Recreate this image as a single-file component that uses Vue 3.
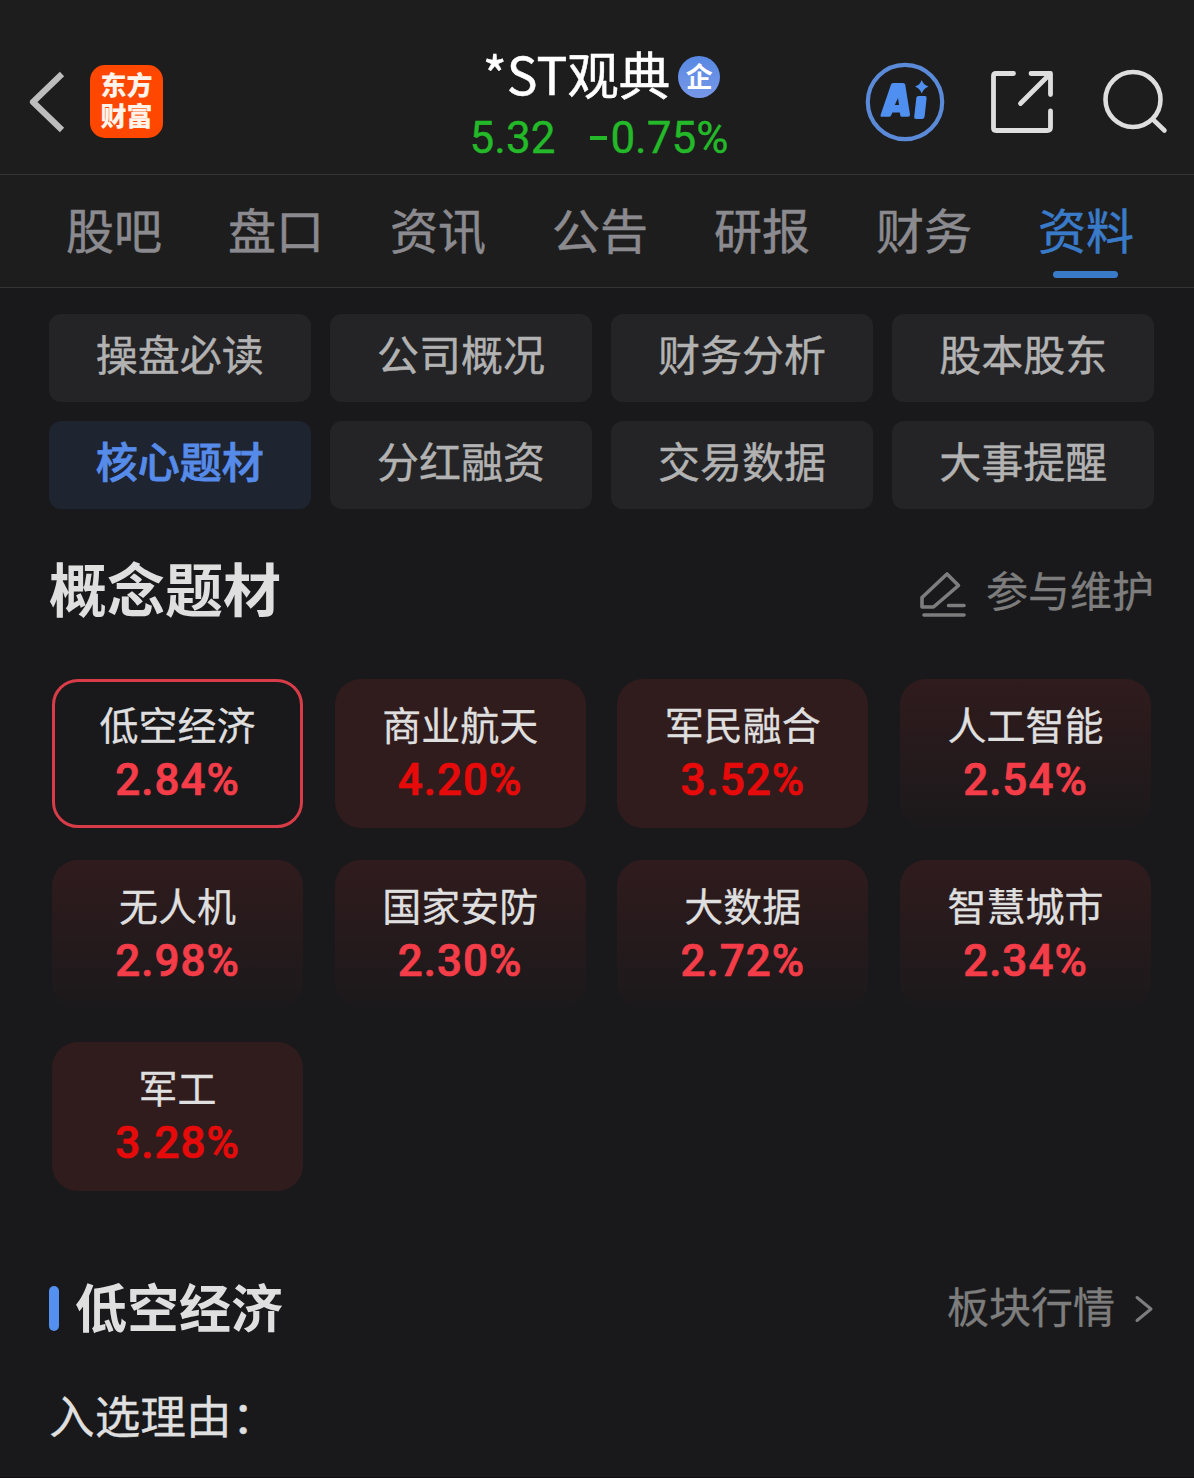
<script setup>
const tabs = ['股吧', '盘口', '资讯', '公告', '研报', '财务', '资料']
const activeTab = '资料'

const sections = [
  '操盘必读', '公司概况', '财务分析', '股本股东',
  '核心题材', '分红融资', '交易数据', '大事提醒',
]
const activeSection = '核心题材'

const concepts = [
  { name: '低空经济', change: '2.84%', tone: 'selected' },
  { name: '商业航天', change: '4.20%', tone: 'strong' },
  { name: '军民融合', change: '3.52%', tone: 'strong' },
  { name: '人工智能', change: '2.54%', tone: 'mild' },
  { name: '无人机', change: '2.98%', tone: 'mild' },
  { name: '国家安防', change: '2.30%', tone: 'mild' },
  { name: '大数据', change: '2.72%', tone: 'mild' },
  { name: '智慧城市', change: '2.34%', tone: 'mild' },
  { name: '军工', change: '3.28%', tone: 'strong' },
]
</script>

<template>
  <div class="page">
    <header class="header">
      <div class="side left">
        <svg class="back" width="36" height="62" viewBox="0 0 36 62" fill="none" stroke="#bdbdbd" stroke-width="6.2" stroke-linejoin="round">
          <path d="M33 3 L4 31 L33 59" />
        </svg>
        <div class="logo"><span>东方</span><span>财富</span></div>
      </div>
      <div class="stock">
        <div class="name-row">
          <span class="name">*ST观典</span>
          <span class="badge">企</span>
        </div>
        <div class="quote"><span>5.32</span><span class="delta"><i class="minus"></i>0.75%</span></div>
      </div>
      <div class="side right">
        <svg width="80" height="80" viewBox="0 0 80 80">
          <circle cx="40" cy="40" r="37.2" fill="none" stroke="#5a8ad8" stroke-width="4.200" />
          <path fill="#4f8ff0" fill-rule="evenodd" d="M28 21 H38 Q39.800 21 40.200 22.500 L45 52.500 Q45 54.800 43 54.800 H37 Q35.500 54.800 35.300 53.500 L34.800 50.500 H27.500 L26 53.500 Q25.500 54.800 24 54.800 H17 Q14.800 54.800 15.800 52.200 L26 22.500 Q26.500 21 28 21 Z M33 36 L29.800 43 H34 Z" />
          <path fill="#4f8ff0" d="M53.500 34 H60 Q61.800 34 61.600 36 L59.600 54.500 Q59.300 57 57 57 H51 Q49 57 49.200 55 L51.300 36 Q51.500 34 53.500 34 Z M56.700 18 Q58.500 23 63.500 24.500 Q58.500 26.500 56.700 31.500 Q55 26.500 50 24.500 Q55 23 56.700 18 Z" />
        </svg>
        <svg class="share" width="64" height="64" viewBox="0 0 64 64" fill="none" stroke="#dedede" stroke-width="4.800" stroke-linecap="round" stroke-linejoin="round">
          <path d="M23.500 3.500 H6 Q3.500 3.500 3.500 6 V58 Q3.500 60.500 6 60.500 H57 Q60.500 60.500 60.500 57.500 V41" />
          <path d="M41 3.500 H60.500 V24.500 M59 5 L30.500 33.500" />
        </svg>
        <svg class="search" width="66" height="66" viewBox="0 0 66 66" fill="none" stroke="#dedede" stroke-width="4.600" stroke-linecap="round">
          <circle cx="31" cy="30.500" r="27.500" />
          <path d="M51 50.500 L62.500 61.500" />
        </svg>
      </div>
    </header>

    <nav class="tabs">
      <a v-for="tab in tabs" :key="tab" class="tab" :class="{ active: tab === activeTab }">{{ tab }}</a>
    </nav>

    <main class="content">
      <div class="sections">
        <button v-for="item in sections" :key="item" class="section" :class="{ active: item === activeSection }">{{ item }}</button>
      </div>

      <div class="heading">
        <h1>概念题材</h1>
        <a class="maintain">
          <svg width="48" height="48" viewBox="0 0 48 48" fill="none" stroke="#7d7d7d" stroke-width="3.600" stroke-linecap="round" stroke-linejoin="round">
            <path d="M28 4 L39.500 15.500 L14.500 37 H3 V27.500 Z" />
            <path d="M29.500 35.500 H45 M5 45 H45" />
          </svg>
          <span>参与维护</span>
        </a>
      </div>

      <div class="concepts">
        <div v-for="c in concepts" :key="c.name" class="card" :class="c.tone">
          <span class="card-name">{{ c.name }}</span>
          <span class="card-change">{{ c.change }}</span>
        </div>
      </div>

      <div class="subheading">
        <i class="bar"></i>
        <h2>低空经济</h2>
        <a class="market">
          <span>板块行情</span>
          <svg width="20" height="28" viewBox="0 0 20 28" fill="none" stroke="#7d7d7d" stroke-width="3" stroke-linecap="round" stroke-linejoin="round">
            <path d="M3 2.500 L17 14 L3 25.500" />
          </svg>
        </a>
      </div>
      <p class="reason">入选理由：</p>
    </main>
  </div>
</template>

<style>
body {
  margin: 0;
  background: #19191b;
}
</style>

<style scoped>
.page {
  width: 1194px;
  height: 1478px;
  overflow: hidden;
  box-sizing: border-box;
  border-bottom: 1px solid #110f12;
  background: #19191b;
  font-family: "Noto Sans CJK SC", sans-serif;
  color: #dfdfdf;
}

.header {
  display: grid;
  grid-template-columns: 400px 1fr 400px;
  height: 175px;
  box-sizing: border-box;
  background: #1d1d1d;
  border-bottom: 1px solid #343434;
}

.side {
  display: flex;
  align-items: flex-start;
}

.back {
  margin: 71px 0 0 29px;
}

.logo {
  display: flex;
  flex-direction: column;
  align-items: center;
  width: 73px;
  height: 73px;
  margin: 65px 0 0 25px;
  padding-top: 3px;
  box-sizing: border-box;
  border-radius: 15px;
  background: #ff4700;
  color: #fff4ec;
  font-size: 26px;
  font-weight: 900;
  line-height: 31px;
}

.stock {
  display: flex;
  flex-direction: column;
  align-items: center;
}

.name-row {
  display: flex;
  align-items: center;
  gap: 8px;
  height: 60px;
  margin-top: 43px;
  padding-left: 9px;
}

.name {
  color: #fff;
  font-size: 51.500px;
  line-height: 60px;
  -webkit-text-stroke: 0.500px currentColor;
}

.badge {
  display: flex;
  align-items: center;
  justify-content: center;
  width: 42px;
  height: 42px;
  margin-top: 8px;
  border-radius: 50%;
  background: linear-gradient(#5788e3, #7898e7);
  color: #fff;
  font-size: 27px;
  font-weight: 700;
  line-height: 36px;
  padding-bottom: 3px;
  box-sizing: border-box;
}

.quote {
  display: flex;
  gap: 35px;
  margin-top: 10px;
  padding-left: 4px;
  color: #23b929;
  font-family: Roboto, sans-serif;
  font-size: 44px;
  line-height: 50px;
  -webkit-text-stroke: 0.400px currentColor;
}

.delta {
  display: flex;
  align-items: center;
}

.minus {
  width: 17px;
  height: 4px;
  margin-right: 3px;
  background: currentColor;
}

.right {
  padding-left: 71px;
}

.right > svg:first-child {
  margin-top: 62px;
}

.share {
  margin: 70px 0 0 45px;
}

.search {
  margin: 69px 0 0 48px;
}

.tabs {
  display: flex;
  justify-content: space-between;
  height: 113px;
  padding: 0 60px 0 66px;
  box-sizing: border-box;
  background: #1d1d1d;
  border-bottom: 1px solid #343436;
}

.tab {
  display: flex;
  flex-direction: column;
  align-items: center;
  padding-top: 23px;
  color: #8b8a8f;
  font-size: 48px;
  line-height: 60px;
  -webkit-text-stroke: 0.500px currentColor;
}

.tab.active {
  color: #3a7bc9;
}

.tab.active::after {
  content: "";
  width: 65px;
  height: 7px;
  margin-top: 13px;
  border-radius: 4px;
  background: #3a7bc9;
}

.content {
  padding: 26px 40px 0 49px;
}

.sections {
  display: grid;
  grid-template-columns: repeat(4, 1fr);
  gap: 19px 19.400px;
}

.section {
  height: 88px;
  padding: 0 0 11px;
  border: 0;
  border-radius: 12px;
  background: #242426;
  color: #b2b2b2;
  font-family: inherit;
  font-size: 42px;
  line-height: 60px;
  -webkit-text-stroke: 0.400px currentColor;
}

.section.active {
  background: #1e2430;
  color: #568bea;
  font-weight: 500;
  -webkit-text-stroke: 0.800px currentColor;
}

.heading {
  display: flex;
  justify-content: space-between;
  height: 80px;
  margin-top: 38px;
}

h1,
h2,
.reason {
  margin: 0;
}

h1 {
  font-size: 58px;
  line-height: 80px;
}

.maintain {
  display: flex;
  align-items: center;
  gap: 19px;
  height: 84px;
  color: #7d7d7d;
  font-size: 42px;
  line-height: 60px;
  -webkit-text-stroke: 0.300px currentColor;
}

.maintain svg {
  margin-top: 9px;
}

.maintain span {
  margin-top: -1px;
}

.concepts {
  display: grid;
  grid-template-columns: repeat(4, 251px);
  justify-content: space-between;
  row-gap: 32.400px;
  margin: 52px 3px 0;
}

.card {
  display: flex;
  flex-direction: column;
  align-items: center;
  height: 149px;
  padding-top: 18px;
  box-sizing: border-box;
  border-radius: 26px;
}

.card.selected {
  padding-top: 15px;
  border: 3px solid #d73c48;
}

.card.strong {
  background: #311c1d;
}

.card.mild {
  background: linear-gradient(#301b1d, #1b191b);
}

.card-name {
  font-size: 39px;
  line-height: 52px;
  -webkit-text-stroke: 0.300px currentColor;
}

.card-change {
  color: #f43d48;
  font-family: Roboto, sans-serif;
  font-size: 44px;
  font-weight: 500;
  line-height: 52px;
  letter-spacing: 1px;
  margin-top: 5px;
  -webkit-text-stroke: 0.700px currentColor;
}

.strong .card-change {
  color: #e60b0a;
}

.subheading {
  display: flex;
  align-items: center;
  height: 80px;
  margin-top: 78px;
}

.bar {
  width: 10px;
  height: 45px;
  border-radius: 5px;
  background: #5390ef;
}

h2 {
  margin: -5px 0 0 16px;
  font-size: 52px;
  line-height: 70px;
}

.market {
  display: flex;
  align-items: center;
  gap: 19px;
  margin-left: auto;
  color: #7d7d7d;
  font-size: 42px;
  line-height: 60px;
  -webkit-text-stroke: 0.300px currentColor;
}

.market span {
  margin-top: -8px;
}

.reason {
  margin-top: 35px;
  font-size: 45.700px;
  line-height: 60px;
  -webkit-text-stroke: 0.300px currentColor;
}
</style>
